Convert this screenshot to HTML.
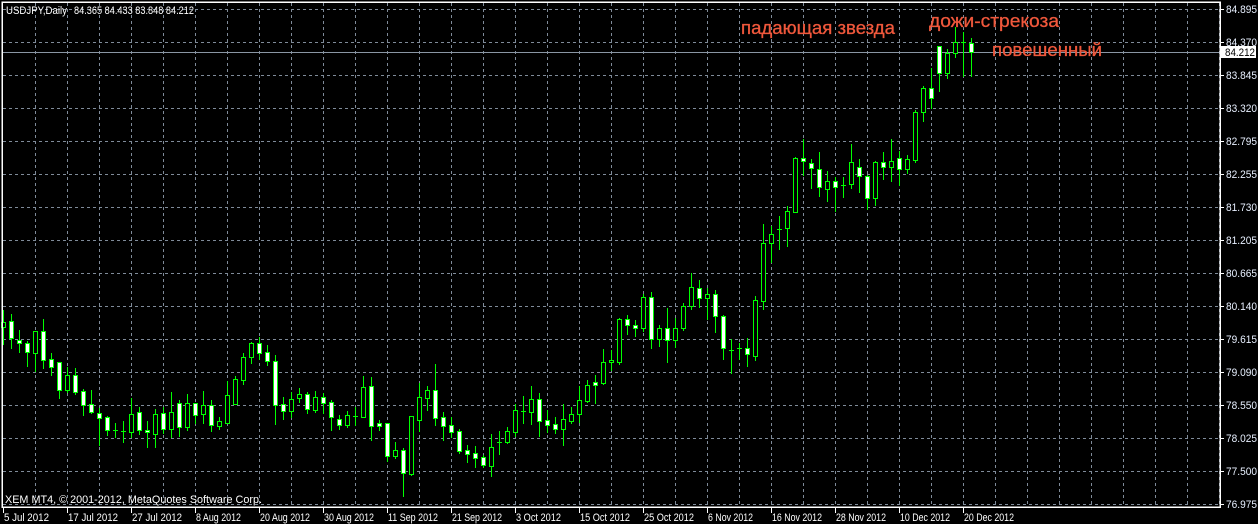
<!DOCTYPE html>
<html><head><meta charset="utf-8"><style>
html,body{margin:0;padding:0;background:#000;width:1258px;height:524px;overflow:hidden}
svg{display:block}
text{font-family:"Liberation Sans",sans-serif;font-size:11px}
.ru{font-family:"Liberation Sans","DejaVu Sans",sans-serif;font-size:18.5px;fill:#f0583c;stroke:#f0583c;stroke-width:0.3}
</style></head><body>
<svg id="s" width="1258" height="524" xmlns="http://www.w3.org/2000/svg" shape-rendering="crispEdges">
<rect width="1258" height="524" fill="#000"/>
<g id="grid"></g>
<line x1="3" y1="52.5" x2="1220" y2="52.5" stroke="#8a96a4" stroke-width="1"/>
<g id="candles"></g>
<rect x="2" y="2" width="1218" height="505" fill="none" stroke="#fff" stroke-width="1.5"/>
<g id="axis"></g>
<rect x="1221" y="46" width="35" height="12" fill="#fff"/>
<text x="1225" y="56" fill="#000" textLength="30" lengthAdjust="spacingAndGlyphs">84.212</text>
<text x="6" y="14" fill="#fff" textLength="61" lengthAdjust="spacingAndGlyphs">USDJPY,Daily</text>
<text x="74" y="14" fill="#fff" textLength="120" lengthAdjust="spacingAndGlyphs">84.365 84.433 83.848 84.212</text>
<text x="5" y="503" fill="#fff" textLength="257" lengthAdjust="spacingAndGlyphs">XEM MT4, © 2001-2012, MetaQuotes Software Corp.</text>
<text x="741" y="34" class="ru" textLength="154" lengthAdjust="spacingAndGlyphs">падающая звезда</text>
<text x="929" y="27" class="ru" textLength="130" lengthAdjust="spacingAndGlyphs">дожи-стрекоза</text>
<text x="992" y="56" class="ru" textLength="110" lengthAdjust="spacingAndGlyphs">повешенный</text>
</svg>
<script>
var NS="http://www.w3.org/2000/svg";
function el(p,t,a){var e=document.createElementNS(NS,t);for(var k in a)e.setAttribute(k,a[k]);p.appendChild(e);return e;}
var g=document.getElementById('grid');
for(var k=0;k<16;k++){var y=9+33*k+0.5;el(g,'line',{x1:3,y1:y,x2:1220,y2:y,stroke:'#7f8b99','stroke-dasharray':'3,3'});}
for(var x=35;x<1220;x+=32){el(g,'line',{x1:x+0.5,y1:3,x2:x+0.5,y2:507,stroke:'#7f8b99','stroke-dasharray':'3,3'});}
var ax=document.getElementById('axis');
var pr=["84.895","84.370","83.845","83.320","82.795","82.255","81.730","81.205","80.665","80.140","79.615","79.090","78.550","78.025","77.500","76.975"];
for(var k=0;k<16;k++){var y=9+33*k;el(ax,'rect',{x:1221,y:y,width:3,height:1,fill:'#fff'});
 var t=el(ax,'text',{x:1226,y:y+4,fill:'#e8f0ff',textLength:31,lengthAdjust:'spacingAndGlyphs'});t.textContent=pr[k];}
var d=["5 Jul 2012","17 Jul 2012","27 Jul 2012","8 Aug 2012","20 Aug 2012","30 Aug 2012","11 Sep 2012","21 Sep 2012","3 Oct 2012","15 Oct 2012","25 Oct 2012","6 Nov 2012","16 Nov 2012","28 Nov 2012","10 Dec 2012","20 Dec 2012"];
for(var k=0;k<16;k++){var x=3+64*k;el(ax,'rect',{x:x,y:507,width:1,height:6,fill:'#fff'});
 var w=Math.round(d[k].length*4.5);
 var t=el(ax,'text',{x:x+1,y:521,fill:'#fff',textLength:w,lengthAdjust:'spacingAndGlyphs'});t.textContent=d[k];}
var C=[
[310,344,322,327,0],[314,348,321,338,1],[330,352,340,343,1],[341,366,343,352,1],[331,371,331,353,0],[319,368,331,360,1],[353,375,359,367,1],[362,398,362,390,1],
[367,392,375,390,0],[368,394,375,392,1],[389,415,391,405,1],[390,413,404,412,1],[408,445,413,418,1],[416,435,417,430,1],[423,437,430,430,1],[421,442,431,431,1],
[398,437,414,432,0],[407,434,412,430,1],[421,447,430,432,1],[409,447,414,434,0],[407,433,413,429,1],[392,437,412,429,0],[400,436,403,427,1],[394,430,403,427,0],
[403,423,403,415,1],[391,423,405,414,0],[400,431,405,425,1],[417,429,421,426,0],[381,423,395,423,0],[376,404,379,404,0],[353,384,357,380,0],[342,363,343,357,0],
[337,359,343,353,1],[345,365,352,361,1],[355,424,361,405,1],[397,419,404,411,1],[392,417,399,411,0],[388,402,394,398,0],[392,413,394,409,1],[391,412,397,410,0],
[393,413,397,403,1],[400,430,402,417,1],[415,429,419,425,1],[411,427,415,425,0],[407,425,416,416,1],[376,417,387,417,0],[377,440,386,426,1],[420,430,423,426,1],
[423,461,423,456,1],[442,458,450,456,0],[448,496,450,473,1],[416,475,416,474,0],[383,431,397,420,0],[386,410,390,398,0],[364,425,390,418,1],[412,440,417,426,1],
[417,437,425,432,1],[429,453,431,451,1],[445,462,450,454,1],[446,467,453,458,1],[455,467,457,465,1],[434,476,447,466,0],[431,454,442,442,1],[427,443,431,442,0],
[404,436,410,432,0],[396,423,411,411,1],[386,424,399,412,0],[393,436,399,421,1],[410,432,420,425,1],[417,433,424,429,1],[404,445,419,429,0],[407,423,414,421,0],
[386,422,400,414,0],[380,402,385,401,0],[375,403,382,385,1],[349,384,362,383,0],[350,370,360,362,0],[318,364,319,362,0],[315,334,319,325,1],[320,336,325,328,1],
[294,331,297,328,0],[292,348,297,339,1],[325,346,328,339,0],[308,362,328,340,1],[318,347,328,340,0],[303,330,306,328,0],[273,309,287,306,0],[280,307,288,298,1],
[288,319,294,298,0],[290,332,294,316,1],[315,359,316,348,1],[339,373,350,350,1],[343,359,348,348,1],[338,366,348,354,1],[296,360,300,356,0],[224,309,243,301,0],
[226,262,234,243,0],[216,249,229,229,1],[206,246,211,228,0],[157,212,158,212,0],[139,175,158,161,1],[159,188,163,168,1],[152,196,169,187,1],[171,201,181,189,0],
[177,211,181,187,1],[177,197,185,185,1],[144,188,162,184,0],[159,192,167,176,1],[175,209,176,198,1],[161,205,162,198,0],[152,179,162,167,1],[139,181,161,167,0],
[151,185,158,169,1],[155,173,159,169,0],[110,162,112,160,0],[86,121,88,112,0],[68,108,88,98,1],[46,91,46,73,1],[49,78,53,73,0],[27,57,42,53,0],
[32,76,42,42,1],[38,76,43,52,1]];
var cg=document.getElementById('candles'),G='#00ff00';
C.forEach(function(c,i){var x=3+8*i;
 el(cg,'rect',{x:x,y:c[0],width:1,height:c[1]-c[0]+1,fill:G});
 if(c[2]==c[3]){el(cg,'rect',{x:x-2,y:c[2],width:5,height:1,fill:G});}
 else{el(cg,'rect',{x:x-2,y:c[2],width:5,height:c[3]-c[2]+1,fill:G});
  if(c[3]-c[2]>1)el(cg,'rect',{x:x-1,y:c[2]+1,width:3,height:c[3]-c[2]-1,fill:c[4]?'#fff':'#000'});}
});
</script>
</body></html>
